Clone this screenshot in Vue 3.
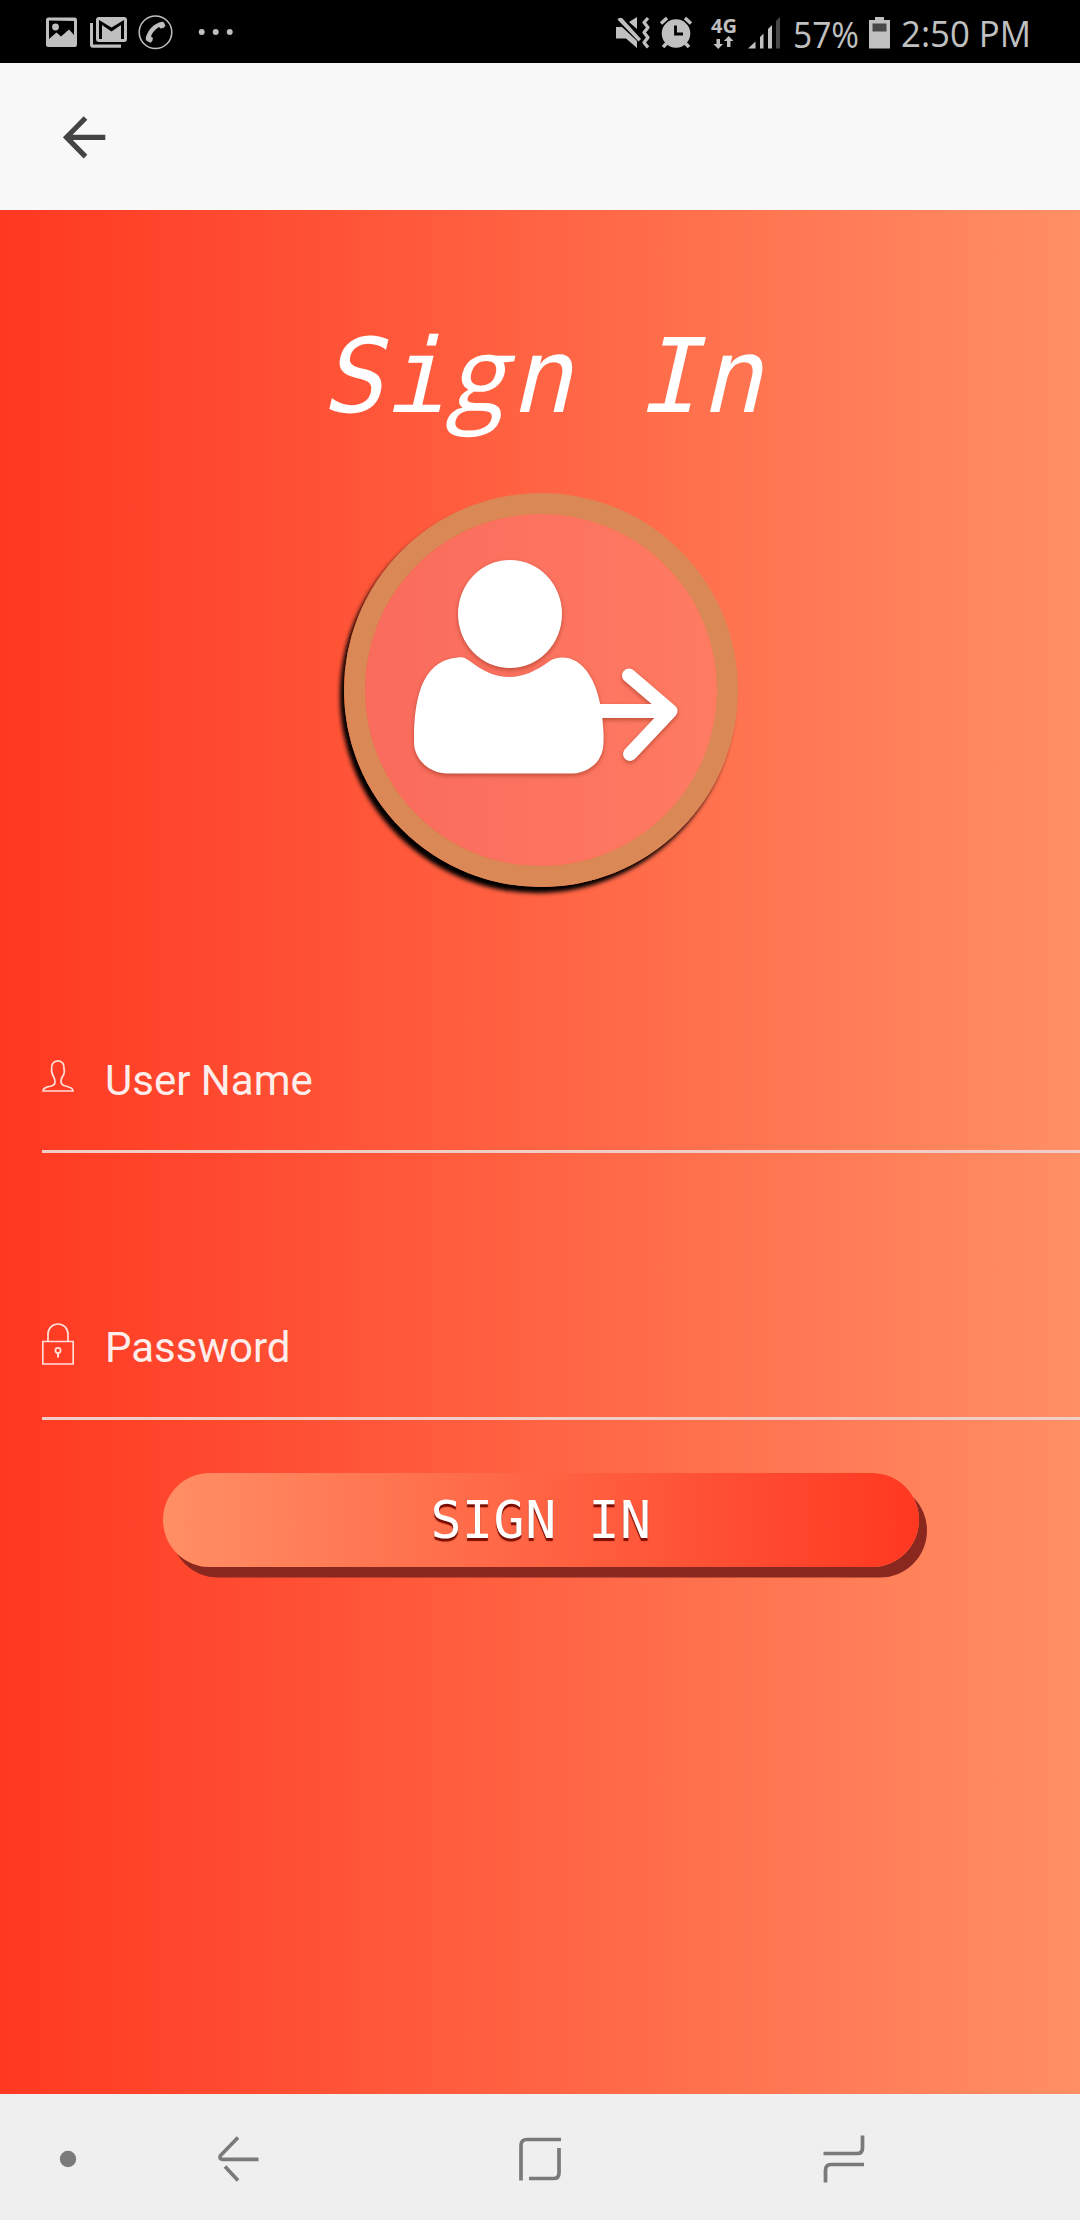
<script setup>
const fields = [
  { id: 'user', label: 'User Name' },
  { id: 'lock', label: 'Password' },
]
</script>

<template>
  <div class="screen">
    <div class="status">
      <svg class="st-left" width="240" height="63" viewBox="0 0 240 63" fill="#bfbfbf">
        <path fill-rule="evenodd" d="M48.500 17.500h26q2.500 0 2.500 2.500v24.500q0 2.500-2.500 2.500h-26q-2.500 0-2.500-2.500v-24.500q0-2.500 2.500-2.500zM49 20.500v18.500l7.500-6.500 4.500 4 8-7 5 5.500v-14z" />
        <circle cx="55.500" cy="27" r="3.400" />
        <path d="M90 23h3v21.500h28v3.300h-28q-3 0-3-3z" />
        <path fill-rule="evenodd" d="M99 17h25q3 0 3 3v19q0 3-3 3h-25q-3 0-3-3v-19q0-3 3-3zM99 20v19h3v-14l9.500 6.500 9.500-6.500v14h3v-19l-12.500 7.500z" />
        <circle cx="155.500" cy="32.300" r="16.300" fill="none" stroke="#bfbfbf" stroke-width="1.500" />
        <path d="M159 22.500q4-1.500 5 0l1.500 3.500q-2 2.500-5 2.500l-1.500-1.500q-6 3.500-8 9.500l2 1.500q0 3-2.500 4.800l-4-2q-1.500-2 0-5.500 3.500-9 12.500-12.800z" />
        <circle cx="201.700" cy="32" r="3" /><circle cx="215.700" cy="32" r="3" /><circle cx="229.700" cy="32" r="3" />
      </svg>
      <svg class="st-right" width="480" height="63" viewBox="0 0 480 63" fill="#c0c0c0">
        <path d="M16 27h6l15 14v7l-11-9.500h-10zM29 22l8-5v12zM19 18l3 0 19 21-2.500 2.500-21-22z" />
        <path d="M48 18l-4 4.500 4 5-4 5 4 5-4 5 4 5" fill="none" stroke="#c0c0c0" stroke-width="3.300" stroke-linejoin="round" />
        <circle cx="76" cy="33.500" r="14.300" />
        <path d="M67 43l-4 4M85 43l4 4M61 23.500l6-5.500M91 23.500l-6-5.500" stroke="#c0c0c0" stroke-width="3.500" />
        <path d="M75.500 25.500v8.500h7.500" fill="none" stroke="#000" stroke-width="2.800" />
        <text class="net" x="111" y="32.500" textLength="26" lengthAdjust="spacingAndGlyphs">4G</text>
        <path d="M116.500 39h3.500v5h3l-4.800 5-4.800-5h3.100zM127 47h3.500v-6h3l-4.800-5-4.800 5h3.100z" />
        <path d="M148 48.500l7.500-7v7zM160 37l3.500-3.500v15h-3.500zM168 29l4-4v23.500h-4z" />
        <path d="M176 21l4-4v31.500h-4z" fill="#484848" />
        <text class="clock" x="193" y="48" textLength="66" lengthAdjust="spacingAndGlyphs">57%</text>
        <path d="M275 17h9v3h6v28.500h-21v-28.500h6z" />
        <path d="M272.500 23.500h14v8h-14z" fill="#484848" />
        <text class="clock" x="301" y="47" textLength="130" lengthAdjust="spacingAndGlyphs">2:50 PM</text>
      </svg>
    </div>

    <header class="header">
      <svg width="44" height="44" viewBox="0 0 44 44" fill="none" stroke="#444" stroke-width="5.200">
        <path d="M42.300 22.300H4M22.500 3l-19 19.300 19 19.300" />
      </svg>
    </header>

    <main class="content">
      <h1 class="title">Si<span class="title-g">g</span>n In</h1>

      <div class="avatar">
        <svg width="352" height="352" viewBox="0 0 352 352">
          <g class="figure" fill="#fff">
            <ellipse cx="145" cy="100" rx="52" ry="54" />
            <path d="M93 143.500C97 142.500 100 143.500 104 146.500C118 157.500 131 163 144.500 163C158 163 172 156.500 184 147.500C188 144.500 193 143.500 197 143.500C219 143.500 233 168 237 201C239 220 240 235 235 243C231 253 217 259.500 208 259.500H82C65 259.500 50 246 49 230C49 190 54 147 93 143.500Z" />
            <path d="M232 197H302M264 161.500L305.500 197L265 240" fill="none" stroke="#fff" stroke-width="14" stroke-linecap="round" stroke-linejoin="round" />
          </g>
        </svg>
      </div>

      <div class="form">
        <div v-for="f in fields" :key="f.id" class="field" :class="f.id">
          <svg v-if="f.id === 'user'" class="icon" width="32" height="44" viewBox="0 0 32 44" fill="none" stroke="#ffe0da" stroke-width="1.700">
            <path d="M1 32H31C31 28 26 28 22.500 26.800Q19 25.500 19 22.500Q19 20.500 20.500 17.500C22.500 15 22.500 12 22 10C22.500 5 20 1.800 16 1.800S9 5 9.700 10C9 13 10 15 11.500 17.500Q13 20.500 13 23Q13 26 9.500 27C5 28 1 28.500 1 32Z" />
          </svg>
          <svg v-else class="icon" width="32" height="44" viewBox="0 0 32 44" fill="none" stroke="#ffe0da" stroke-width="1.700">
            <path d="M.8 19.500H31.200V42H.8ZM6 19V12a10 10 0 0 1 20 0V19" />
            <path d="M16 30.500V35.500" stroke-width="2" /><circle cx="16" cy="28.500" r="2.600" />
          </svg>
          <span class="label">{{ f.label }}</span>
        </div>
      </div>

      <button class="submit">SIGN IN</button>
    </main>

    <nav class="nav">
      <svg width="1080" height="126" viewBox="0 0 1080 126" fill="none" stroke="#7a7a7a" stroke-width="3.700">
        <circle cx="68" cy="65" r="8.200" fill="#7a7a7a" stroke="none" />
        <path d="M258.500 65.300H222Q219 64.500 220.500 61.500L238 43.500M225 72.500L238 86.500" />
        <path d="M521 86.500V51.500Q521 45.500 527 45.500H561M559 54V79Q559 84.500 553.500 84.500H529" />
        <path d="M823.500 59.500H857Q862.500 59.500 862.500 54V41.500M864 70.500H831Q825.500 70.500 825.500 76.500V88.500" />
      </svg>
    </nav>
  </div>
</template>

<style>
body { margin: 0; }
</style>

<style scoped>
.screen { width: 1080px; height: 2220px; display: flex; flex-direction: column; overflow: hidden; font-family: Roboto, sans-serif; }
.status { height: 63px; background: #000; display: flex; justify-content: space-between; }
.status svg, .nav svg { display: block; }
.net { font: 700 19px "Noto Sans", sans-serif; }
.clock { font: 400 36px "Open Sans", sans-serif; }
.header { height: 147px; background: #f8f8f8; display: flex; align-items: center; padding-left: 63px; box-sizing: border-box; }
.content { height: 1884px; display: flex; flex-direction: column; align-items: center; background: linear-gradient(90deg, #ff3821, #ff8f65); }
.title { margin: 96px 0 0 20px; height: 140px; line-height: 140px; font-family: "DejaVu Sans Mono", monospace; font-weight: 400; font-size: 103px; letter-spacing: 1.400px; color: #fff; white-space: pre; transform: skewX(-13deg); }
.title-g { font-family: "Open Sans", sans-serif; font-size: 105px; letter-spacing: 5.500px; line-height: 1; }
.avatar { margin: 47px 0 0 2px; flex: none; width: 352px; height: 352px; border: 21px solid #d98856; border-radius: 50%; background: linear-gradient(90deg, #f96b5d, #ff7b62); background-clip: padding-box; box-shadow: -4px 6px 4px #000; }
.avatar svg { display: block; }
.figure { filter: drop-shadow(0 2px 2px rgba(150, 50, 30, .6)); }
.form { align-self: stretch; padding-left: 42px; margin-top: 162px; }
.field { display: flex; box-sizing: border-box; height: 104px; border-bottom: 3px solid #f0cdc7; }
.lock { margin-top: 163px; }
.icon { margin-top: 10px; }
.lock .icon { margin-top: 6px; }
.label { margin-left: 31px; margin-top: 7px; height: 50px; line-height: 50px; font-size: 42px; color: #fdeeec; }
.submit { margin: 53px 0 0 2px; flex: none; width: 756px; height: 94px; padding: 0; border: 0; border-radius: 47px; background: linear-gradient(90deg, #ff8f65, #ff3821); box-shadow: 8px 10.500px 0 #8a2820; color: #fff; font-family: "DejaVu Sans Mono", monospace; font-size: 51.500px; letter-spacing: .6px; line-height: 94px; text-shadow: 0 3px 1px #7a0c00; }
.nav { height: 126px; background: #efefef; }
</style>
